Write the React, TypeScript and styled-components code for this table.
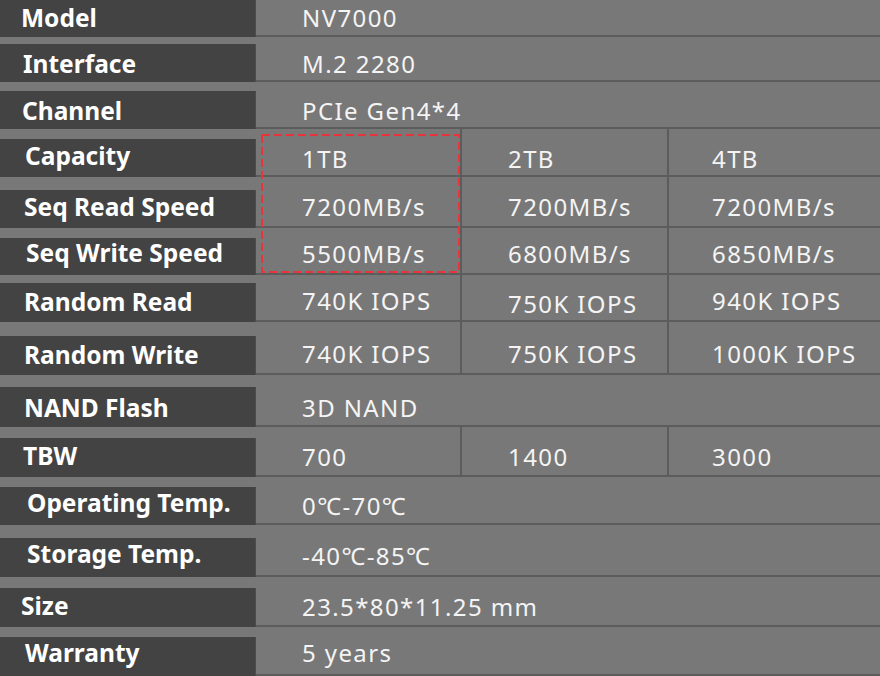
import React from "react";
import styled, { createGlobalStyle } from "styled-components";

const Global = createGlobalStyle`
  html, body { margin: 0; padding: 0; background: #787878; }
  body { width: 880px; height: 676px; overflow: hidden; }
`;

const Sheet = styled.div`
  position: relative;
  width: 880px;
  height: 676px;
  background: #787878;
  display: flex;
  flex-direction: column;
  font-family: "Noto Sans", "Open Sans", sans-serif;
`;

const Row = styled.div<{ $h: number }>`
  display: grid;
  grid-template-columns: 256px 1fr;
  height: ${(p) => p.$h}px;
`;

const Label = styled.div<{ $cell: number; $indent: number; $shift: number }>`
  align-self: end;
  height: ${(p) => p.$cell}px;
  background: #434343;
  box-sizing: border-box;
  border-right: 1px solid #4d4d4d;
  color: #ffffff;
  font-weight: 700;
  font-size: 24.5px;
  display: flex;
  align-items: center;
  padding-left: ${(p) => p.$indent}px;
  white-space: nowrap;

  span {
    position: relative;
    top: ${(p) => p.$shift}px;
  }
`;

const Values = styled.div<{ $split: boolean }>`
  display: grid;
  grid-template-columns: ${(p) => (p.$split ? "206px 207px 1fr" : "1fr")};
  border-bottom: 2px solid #5c5c5c;
  box-sizing: border-box;
`;

const Value = styled.div<{ $cell: number; $shift?: number; $pad: number; $divider: boolean }>`
  display: flex;
  align-items: flex-end;
  box-sizing: border-box;
  border-right: ${(p) => (p.$divider ? "2px solid #5c5c5c" : "none")};
  padding-left: ${(p) => p.$pad}px;
  color: #f4f4f4;
  font-size: 24px;
  letter-spacing: 1.4px;
  white-space: nowrap;

  span {
    display: flex;
    align-items: center;
    height: ${(p) => p.$cell}px;
    margin-bottom: -2px;
    position: relative;
    top: ${(p) => p.$shift ?? 0}px;
  }
`;

const Highlight = styled.svg`
  position: absolute;
  left: 261px;
  top: 134px;
  width: 200px;
  height: 139px;
  pointer-events: none;
`;

type RowData = {
  label: string;
  h: number;
  cell: number;
  indent: number;
  labelShift: number;
  values: string[];
  shifts?: number[];
};

const rows: RowData[] = [
  { label: "Model", h: 37, cell: 37, indent: 21, labelShift: -1, values: ["NV7000"], shifts: [-1] },
  { label: "Interface", h: 45, cell: 38, indent: 23, labelShift: 0, values: ["M.2 2280"] },
  { label: "Channel", h: 47, cell: 38, indent: 22, labelShift: 0, values: ["PCIe Gen4*4"] },
  { label: "Capacity", h: 48, cell: 38, indent: 25, labelShift: -3, values: ["1TB", "2TB", "4TB"] },
  { label: "Seq Read Speed", h: 51, cell: 38, indent: 24, labelShift: -3, values: ["7200MB/s", "7200MB/s", "7200MB/s"], shifts: [-3, -3, -3] },
  { label: "Seq Write Speed", h: 47, cell: 37, indent: 26, labelShift: -4, values: ["5500MB/s", "6800MB/s", "6850MB/s"], shifts: [-3, -3, -3] },
  { label: "Random Read", h: 47, cell: 39, indent: 24, labelShift: -1, values: ["740K IOPS", "750K IOPS", "940K IOPS"], shifts: [-2, 1, -2] },
  { label: "Random Write", h: 53, cell: 39, indent: 24, labelShift: -1, values: ["740K IOPS", "750K IOPS", "1000K IOPS"], shifts: [-2, -2, -2] },
  { label: "NAND Flash", h: 52, cell: 40, indent: 24, labelShift: 0, values: ["3D NAND"] },
  { label: "TBW", h: 50, cell: 39, indent: 23, labelShift: -2, values: ["700", "1400", "3000"], shifts: [-1, -1, -1] },
  { label: "Operating Temp.", h: 48, cell: 38, indent: 27, labelShift: -4, values: ["0℃-70℃"], shifts: [-1] },
  { label: "Storage Temp.", h: 52, cell: 39, indent: 27, labelShift: -4, values: ["-40℃-85℃"], shifts: [-2] },
  { label: "Size", h: 50, cell: 39, indent: 21, labelShift: -2, values: ["23.5*80*11.25 mm"], shifts: [-1] },
  { label: "Warranty", h: 49, cell: 39, indent: 25, labelShift: -4, values: ["5 years"], shifts: [-4] },
];

const pads = [46, 46, 43];

export default function App() {
  return (
    <>
      <Global />
      <Sheet>
        {rows.map((r) => {
          const split = r.values.length > 1;
          return (
            <Row key={r.label} $h={r.h}>
              <Label $cell={r.cell} $indent={r.indent} $shift={r.labelShift}>
                <span>{r.label}</span>
              </Label>
              <Values $split={split}>
                {r.values.map((v, i) => (
                  <Value
                    key={i}
                    $cell={r.cell}
                    $shift={r.shifts?.[i]}
                    $pad={pads[i]}
                    $divider={split && i < 2}
                  >
                    <span>{v}</span>
                  </Value>
                ))}
              </Values>
            </Row>
          );
        })}
        <Highlight viewBox="0 0 200 139">
          <rect
            x="1"
            y="1"
            width="197"
            height="137"
            fill="none"
            stroke="#e8353c"
            strokeWidth="2"
            strokeDasharray="8 4"
          />
        </Highlight>
      </Sheet>
    </>
  );
}
